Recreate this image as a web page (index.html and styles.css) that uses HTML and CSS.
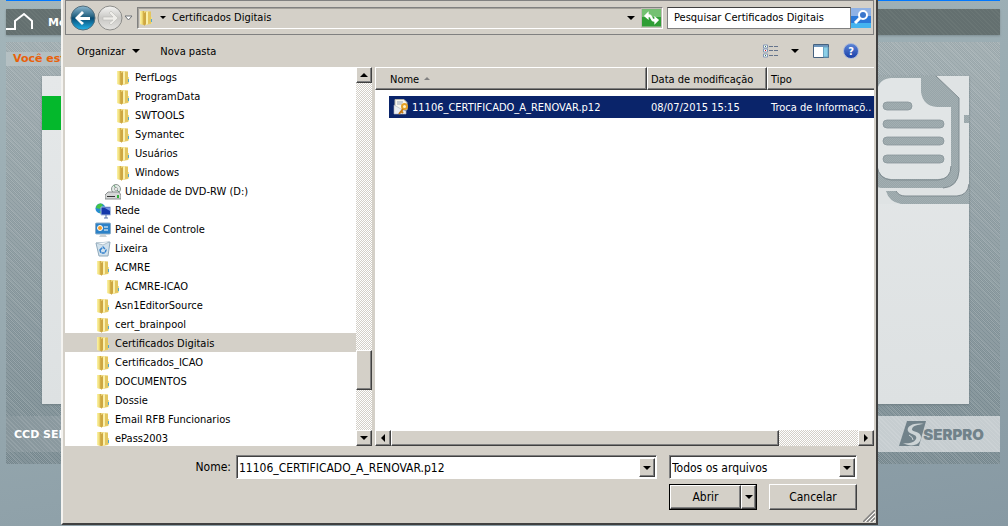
FILE: index.html
```html
<!DOCTYPE html>
<html lang="pt-BR">
<head>
  <meta charset="UTF-8">
  <meta name="viewport" content="width=device-width,initial-scale=1">
  <title>Certificados Digitais</title>
  <link rel="stylesheet" href="styles.css">
</head>
<body>
  <svg width="0" height="0" class="simbolos" aria-hidden="true">
    <defs>
      <linearGradient id="ouro" x1="0" x2="1">
        <stop offset="0" stop-color="#fbf3a8"/>
        <stop offset=".55" stop-color="#f0dc78"/>
        <stop offset="1" stop-color="#c99f34"/>
      </linearGradient>
      <linearGradient id="azul" x1="0" x2="0" y1="0" y2="1">
        <stop offset="0" stop-color="#8db9d2"/>
        <stop offset=".45" stop-color="#23607f"/>
        <stop offset=".5" stop-color="#084a72"/>
        <stop offset="1" stop-color="#20b4ec"/>
      </linearGradient>
      <linearGradient id="cinza" x1="0" x2="0" y1="0" y2="1">
        <stop offset="0" stop-color="#f5f5f3"/>
        <stop offset=".5" stop-color="#c9c8c5"/>
        <stop offset="1" stop-color="#e4e3e0"/>
      </linearGradient>
      <symbol id="pasta" viewBox="0 0 16 16">
        <path d="M2 1h5l6 1v12l-5 1-6-1z" fill="#ecd67c"/>
        <path d="M2 1h4v14l-4-1z" fill="url(#ouro)"/>
        <path d="M6 3l2-1v12l-2 2z" fill="#cda642"/>
        <path d="M8 2l3-1v12l-3 2z" fill="#faf0ab"/>
        <path d="M10 1.500h3v12l-3 .5z" fill="#e3c660"/>
        <path d="M13 7h1v6l-1 1z" fill="#efe08b"/>
        <path d="M13.500 9v3" stroke="#55a8cf"/>
      </symbol>
    </defs>
  </svg>

  <div class="site">
    <header class="menu">
      <svg class="casa" width="28" height="20" viewBox="0 0 28 20"><path d="M0 17h9V9l9-7 8 7v8" fill="none" stroke="#fff" stroke-width="2"/></svg>
      <span>Menu</span>
    </header>
    <main class="painel">
      <p class="caminho">Você está</p>
      <section class="conteudo">
        <div class="faixa"></div>
        <svg class="documento" width="92" height="128" viewBox="0 0 92 128">
          <defs>
            <pattern id="trama" width="2" height="2" patternUnits="userSpaceOnUse">
              <rect width="2" height="2" fill="#a3afb2"/>
              <path d="M0 0h1v1H0zM1 1h1v1H1z" fill="#98a5a9"/>
            </pattern>
          </defs>
          <path d="M0 0h92v128H0z" fill="url(#trama)"/>
          <path d="M0 100h92v28H0z" fill="#dfe3e4"/>
          <path d="M58 0h34v39h-5v8h5v64L80 121H20z" fill="#dfe3e4"/>
          <path d="M9 115h10q3 5 9 5h52q11-1 12-12v20H24Q12 126 9 115z" fill="url(#trama)"/>
          <path d="M19 115q3 5 9 5h52q11-1 12-12" fill="none" stroke="#7f8b90"/>
          <path d="M0 92V0h59l23 22v73q-1 16-16 17H4l-4-1z" fill="url(#trama)"/>
          <path d="M59 0l23 22v73q-1 16-16 17" fill="none" stroke="#7f8b90"/>
          <path d="M0 16Q1 3 14 2h30v14q2 14 16 15h14v59q0 13-13 13H14Q1 102 0 88z" fill="#e1e5e6"/>
          <path d="M0 90q2 13 14 14h47q13-1 13-14" fill="none" stroke="#7f8b90"/>
          <g fill="url(#trama)" stroke="#89969b" stroke-width=".8">
            <rect x="6" y="26" width="29" height="8" rx="4"/>
            <rect x="6" y="44" width="61" height="8" rx="4"/>
            <rect x="6" y="61" width="61" height="8" rx="4"/>
            <rect x="6" y="79" width="61" height="8" rx="4"/>
          </g>
        </svg>
      </section>
      <footer class="rodape">
        <span>CCD SER</span>
        <div class="serpro">
          <svg width="27" height="26" viewBox="0 0 27 26">
            <path d="M8 0h19l-7 25H0z" fill="#71828a"/>
            <path d="M25 3C14 1 7 6 9 10s10 3 8 8c-2 4-8 5-13 4 8 5 18 2 18-6 0-6-10-5-9-8 1-4 6-4 11-5z" fill="#cdd4d6"/>
            <path d="M11 8q1 3 6 4M10 14q4 2 4 5" fill="none" stroke="#cdd4d6"/>
          </svg>
          <b>SERPRO</b>
        </div>
      </footer>
    </main>
  </div>

  <div class="janela" role="dialog" aria-label="Abrir">
    <div class="navegacao">
      <div class="setas">
        <button type="button" aria-label="Voltar"><svg width="26" height="26" viewBox="0 0 26 26"><circle cx="13" cy="13" r="12" fill="url(#azul)" stroke="#536d7b"/><path d="M5 13l7-7 2 2-4 4h10v3H10l4 3-2 2z" fill="#fff"/></svg></button>
        <button type="button" aria-label="Avançar"><svg width="26" height="26" viewBox="0 0 26 26"><circle cx="13" cy="13" r="12" fill="url(#cinza)" stroke="#8d8d8a"/><path d="M21 13l-7-7-2 2 4 4H6v3h10l-4 3 2 2z" fill="#eeede9" stroke="#bbbab6" stroke-width=".6"/></svg></button>
        <button type="button" aria-label="Recentes"><svg width="9" height="6" viewBox="0 0 9 6"><path d="M1 1h7L4.500 5z" fill="#fff" stroke="#6f7377"/></svg></button>
      </div>
      <div class="endereco">
        <svg width="16" height="18" viewBox="0 0 16 16"><use href="#pasta"/></svg>
        <i class="seta pequena"></i>
        <span>Certificados Digitais</span>
        <i class="seta"></i>
        <button type="button" class="atualizar" aria-label="Atualizar"><svg width="19" height="18" viewBox="0 0 20 18"><path d="M0 0h20v18H0z" fill="#2f9e35"/><path d="M0 0h20v8H0z" fill="#74c172"/><path d="M2 7l5-5v3q4 0 4 5H9q0-2-2-2v3zM18 11l-5 5v-3q-4 0-4-5h2q0 2 2 2V7z" fill="#fff"/></svg></button>
      </div>
      <div class="busca">
        <input type="text" value="Pesquisar Certificados Digitais" aria-label="Pesquisar">
        <button type="button" aria-label="Buscar"><svg width="20" height="20" viewBox="0 0 20 20"><path d="M0 0h20v20H0z" fill="#2b78d8"/><path d="M0 0h20v8H0z" fill="#8fb2e6"/><path d="M0 15h20v5H0z" fill="#45b4f0"/><circle cx="12" cy="7" r="4" fill="#3a76cc" stroke="#fff" stroke-width="2"/><path d="M9 10l-5 5" stroke="#fff" stroke-width="3"/></svg></button>
      </div>
    </div>

    <div class="ferramentas">
      <button type="button">Organizar <i class="seta"></i></button>
      <button type="button">Nova pasta</button>
      <div class="direita">
        <button type="button" aria-label="Modo de exibição">
          <svg width="16" height="14" viewBox="0 0 16 14"><path d="M.5 1h4v3h-4zM.5 5h4v3h-4zM.5 10h4v3h-4z" fill="#fff" stroke="#8397b5"/><path d="M2 2h1v1H2zM2 11h1v1H2z" fill="#397d4a"/><path d="M2 6h1v1H2z" fill="#d11"/><path d="M6 2.500h4m1 0h4M6 6.500h4m1 0h4M6 11.500h4m1 0h4" stroke="#65748c"/></svg>
          <i class="seta"></i>
        </button>
        <button type="button" aria-label="Painel de visualização"><svg width="16" height="14" viewBox="0 0 16 14"><path d="M.5.5h15v13H.5z" fill="#fff" stroke="#45617f"/><path d="M1 1h14v2H1z" fill="#6c94bc"/><path d="M10.500 3h4.500v10h-4.500z" fill="#8bd0e8" stroke="#6ba5c4"/></svg></button>
        <button type="button" class="ajuda" aria-label="Ajuda">?</button>
      </div>
    </div>

    <div class="paineis">
      <ul class="arvore">
        <li class="n3"><svg><use href="#pasta"/></svg>PerfLogs</li>
        <li class="n3"><svg><use href="#pasta"/></svg>ProgramData</li>
        <li class="n3"><svg><use href="#pasta"/></svg>SWTOOLS</li>
        <li class="n3"><svg><use href="#pasta"/></svg>Symantec</li>
        <li class="n3"><svg><use href="#pasta"/></svg>Usuários</li>
        <li class="n3"><svg><use href="#pasta"/></svg>Windows</li>
        <li class="n2"><svg viewBox="0 0 16 16"><circle cx="11" cy="5" r="4.500" fill="#e4ece8" stroke="#8c9691"/><path d="M11 5L9 1m2 4l3 3" stroke="#64a273"/><circle cx="11" cy="5" r="1.500" fill="#fff" stroke="#777" stroke-width=".6"/><path d="M3 8h11l2 3v4H0v-4z" fill="#d5d7d7" stroke="#747878" stroke-width=".8"/><path d="M2 12.500h8" stroke="#333"/><path d="M12 11h2v3h-2z" fill="#35b23c"/></svg>Unidade de DVD-RW (D:)</li>
        <li class="n1"><svg viewBox="0 0 16 16"><circle cx="5.500" cy="5.500" r="5" fill="#278bd2"/><path d="M2 2q4-3 6 0L5 6 1 5zM4 8l3 1-1 2z" fill="#45c446"/><path d="M6 4h9.500v8H6z" fill="#1538aa" stroke="#a9bddd"/><path d="M10 5h5v3z" fill="#7394e4"/><path d="M11 12v3m-2 0h4" stroke="#5973a7"/></svg>Rede</li>
        <li class="n1"><svg viewBox="0 0 16 16"><rect x=".5" y="1" width="15" height="11" rx="1" fill="#2c82c8" stroke="#89acc9"/><circle cx="5" cy="6" r="2.500" fill="#f79b25" stroke="#fff"/><path d="M9 5h4M9 8h4" stroke="#fff"/><path d="M6 12h4l2 3H4z" fill="#c7d0d5"/></svg>Painel de Controle</li>
        <li class="n1"><svg viewBox="0 0 16 16"><path d="M1 2l14-1-2 14H4z" fill="#d1e1ec" stroke="#8fa9bb"/><path d="M1 2l7 2 6-3" fill="#f5f9fb" stroke="#98aebb" stroke-width=".7"/><path d="M5 9l3-3 3 3-1 3H6z" fill="none" stroke="#3481cd" stroke-width="1.500" stroke-dasharray="3 1"/></svg>Lixeira</li>
        <li class="n1"><svg><use href="#pasta"/></svg>ACMRE</li>
        <li class="n2"><svg><use href="#pasta"/></svg>ACMRE-ICAO</li>
        <li class="n1"><svg><use href="#pasta"/></svg>Asn1EditorSource</li>
        <li class="n1"><svg><use href="#pasta"/></svg>cert_brainpool</li>
        <li class="n1 atual"><svg><use href="#pasta"/></svg>Certificados Digitais</li>
        <li class="n1"><svg><use href="#pasta"/></svg>Certificados_ICAO</li>
        <li class="n1"><svg><use href="#pasta"/></svg>DOCUMENTOS</li>
        <li class="n1"><svg><use href="#pasta"/></svg>Dossie</li>
        <li class="n1"><svg><use href="#pasta"/></svg>Email RFB Funcionarios</li>
        <li class="n1"><svg><use href="#pasta"/></svg>ePass2003</li>
      </ul>
      <div class="rolagem vertical">
        <button type="button" class="botao" aria-label="Subir"><i class="seta cima"></i></button>
        <div class="trilho"><div class="polegar"></div></div>
        <button type="button" class="botao" aria-label="Descer"><i class="seta"></i></button>
      </div>
      <div class="lista">
        <table>
          <thead>
            <tr>
              <th class="nome">Nome <i class="seta cima ordem"></i></th>
              <th class="data">Data de modificação</th>
              <th>Tipo</th>
            </tr>
          </thead>
          <tbody>
            <tr>
              <td class="nome"><div>
                <svg width="16" height="16" viewBox="0 0 16 16"><path d="M2 .5h9l3 3V11H2z" fill="#f8f6ee" stroke="#b9b6aa"/><path d="M4 3h6M4 5h5" stroke="#9ba6b7"/><path d="M1 6l7 4 5 2v3H1z" fill="#e9edf2" stroke="#aeb4bd" stroke-width=".6"/><circle cx="11.500" cy="7.500" r="2.500" fill="#fff3c4" stroke="#e6a126" stroke-width="2"/><path d="M10 10l-4 5m2-3l2 2" stroke="#c37812" stroke-width="2"/></svg>
                11106_CERTIFICADO_A_RENOVAR.p12</div></td>
              <td>08/07/2015 15:15</td>
              <td>Troca de Informaçõ..</td>
            </tr>
          </tbody>
        </table>
        <div class="rolagem horizontal">
          <button type="button" class="botao" aria-label="Esquerda"><i class="seta esq"></i></button>
          <div class="trilho"><div class="polegar"></div></div>
          <button type="button" class="botao" aria-label="Direita"><i class="seta dir"></i></button>
        </div>
      </div>
    </div>

    <form class="abrir">
      <label for="arquivo">Nome:</label>
      <div class="caixa">
        <input type="text" id="arquivo" value="11106_CERTIFICADO_A_RENOVAR.p12">
        <button type="button" class="botao" aria-label="Arquivos recentes"><i class="seta"></i></button>
      </div>
      <div class="caixa tipo">
        <select aria-label="Tipo de arquivo"><option>Todos os arquivos</option></select>
        <span class="botao"><i class="seta"></i></span>
      </div>
      <div class="acoes">
        <div class="dividido">
          <button type="button" class="botao">Abrir</button>
          <button type="button" class="botao mais" aria-label="Mais opções"><i class="seta"></i></button>
        </div>
        <button type="button" class="botao cancelar">Cancelar</button>
      </div>
    </form>
    <svg class="canto" width="12" height="12" viewBox="0 0 12 12"><path d="M0 12L12 0M4 12l8-8M8 12l4-4" stroke="#808080" stroke-width="1.500"/><path d="M2 12L12 2M6 12l6-6M10 12l2-2" stroke="#fff"/></svg>
  </div>
</body>
</html>
```
FILE: styles.css
```css
*{
  box-sizing: border-box;
  margin: 0; padding: 0;
}
body{
  min-height: 100vh;
  overflow: hidden;
  font-family: "DejaVu Sans Condensed", "Noto Sans", sans-serif;
  font-size: 11px;
  color: #000;
  background: linear-gradient(170deg, #a3b5ba, #94a6ad 60%, #8799a3);
}
button, input, select{
  font: inherit;
  color: inherit;
  border: 0;
  background: none;
  outline: 0;
}
.simbolos{
  position: absolute;
}

/* pagina do fundo */
.site{
  padding: 0 8px 0 6px;
  font-family: "DejaVu Sans", sans-serif;
  font-weight: bold;
}
.site::before{
  content: "";
  display: block;
  height: 1px;
  background: #0078ff;
}
.menu{
  display: flex;
  align-items: center;
  gap: 14px;
  height: 26px;
  margin: 8px 0 7px;
  color: #fff;
  background: repeating-linear-gradient(45deg, #6a7675 0 1px, #647070 1px 3px);
  box-shadow: 0 1px 2px #7f8f94;
}
.painel{
  padding-top: 10px;
  padding-bottom: 12px;
  background:
    repeating-conic-gradient(rgba(255,255,255,.12) 0 25%, transparent 0 50%) 0 0 / 2px 2px,
    repeating-linear-gradient(45deg, rgba(255,255,255,.1) 0 1px, transparent 1px 3px),
    linear-gradient(#9ba8ac, #74868d);
}
.caminho{
  height: 14px;
  margin-bottom: 10px;
  padding-left: 7px;
  line-height: 14px;
  color: #e8610a;
  background: linear-gradient(90deg, #b5c0c3, transparent 50%);
}
.conteudo{
  position: relative;
  height: 328px;
  margin: 0 31px 12px 36px;
  padding-top: 20px;
  background: linear-gradient(#e5e8e9, #dde1e2);
  box-shadow: 0 1px 2px #6f7d83;
}
.faixa{
  height: 34px;
  background: #04b82c;
}
.documento{
  position: absolute;
  top: 0; right: 0;
}
.rodape{
  display: flex;
  align-items: center;
  justify-content: space-between;
  height: 36px;
  padding: 0 16px 0 8px;
  color: #fff;
  background:
    repeating-linear-gradient(45deg, rgba(255,255,255,.1) 0 1px, transparent 1px 3px),
    linear-gradient(90deg, #87969c, #c6cdd0 80%);
}
.serpro{
  display: flex;
  align-items: center;
  color: #71828a;
}
.serpro b{
  margin-left: -3px;
  font: 900 15px Inter, sans-serif;
}

/* janela de abrir arquivo */
.janela{
  position: absolute;
  top: 0; bottom: 1px; left: 61px; right: 130px;
  display: flex;
  flex-direction: column;
  padding: 0 2px;
  background: #d4d0c8;
  border-left: 2px solid #f4f3f0;
  border-right: 2px solid #404040;
  border-bottom: 2px solid #404040;
}
.seta{
  display: inline-block;
  flex: none;
  border: 4px solid transparent;
  border-top-color: #000;
  border-bottom: 0;
}
.pequena{
  border-width: 3px;
  border-bottom: 0;
}
.cima{
  border-top: 0;
  border-bottom: 4px solid #000;
}
.esq, .dir{
  border: 4px solid transparent;
}
.esq{
  border-left: 0;
  border-right-color: #000;
}
.dir{
  border-right: 0;
  border-left-color: #000;
}
.navegacao{
  display: flex;
  align-items: center;
  gap: 4px;
  height: 35px;
  border: 1px solid #808080;
  padding: 0 2px 0 4px;
}
.setas{
  display: flex;
  align-items: center;
  gap: 1px;
}
.setas button{
  display: flex;
}
.endereco{
  display: flex;
  align-items: center;
  flex: 1;
  gap: 6px;
  height: 22px;
  border: 1px solid #808080;
  border-right-color: #fff;
  border-bottom-color: #fff;
  box-shadow: inset 1px 1px #a5a29b;
}
.endereco span{
  flex: 1;
}
.atualizar{
  display: flex;
  border: 1px solid #c0bdb5;
}
.busca{
  display: flex;
  width: 204px;
  height: 22px;
}
.busca input{
  flex: 1;
  min-width: 0;
  padding-left: 6px;
  background: #fff;
  border: 1px solid #808080;
  border-top-color: #404040;
}
.busca button{
  display: flex;
  padding: 1px 0;
}
.ferramentas{
  display: flex;
  align-items: center;
  gap: 20px;
  height: 32px;
  padding: 0 15px 0 12px;
}
.ferramentas button{
  display: flex;
  align-items: center;
  gap: 7px;
}
.direita{
  display: flex;
  gap: 14px;
  margin-left: auto;
}
.direita button{
  gap: 12px;
}
.ferramentas .ajuda{
  justify-content: center;
  width: 16px; height: 16px;
  border: 1px solid #aab8d8;
  border-radius: 8px;
  color: #fff;
  font-weight: bold;
  background: linear-gradient(#5c85d6, #1a3fa8);
}
.paineis{
  display: flex;
  flex: 1;
  min-height: 0;
}
.arvore{
  width: 291px;
  overflow: hidden;
  list-style: none;
  background: #fff;
}
.arvore li{
  display: flex;
  align-items: center;
  gap: 4px;
  height: 19px;
  padding-top: 2px;
  white-space: nowrap;
}
.arvore svg{
  width: 16px; height: 16px;
}
.arvore .n1{
  padding-left: 30px;
}
.arvore .n2{
  padding-left: 40px;
}
.arvore .n3{
  padding-left: 50px;
}
.arvore .atual{
  background: #d4d0c8;
}
.botao{
  display: flex;
  align-items: center;
  justify-content: center;
  background: #d4d0c8;
  border: 1px solid #fff;
  border-right-color: #404040;
  border-bottom-color: #404040;
  box-shadow: inset -1px -1px #808080;
}
.rolagem{
  display: flex;
  background: repeating-conic-gradient(#fff 0 25%, #d4d0c8 0 50%) 0 0 / 2px 2px;
}
.rolagem .botao{
  flex: none;
  width: 16px; height: 16px;
}
.trilho{
  display: flex;
  flex: 1;
}
.polegar{
  background: #d4d0c8;
  border: 1px solid #fff;
  border-right-color: #404040;
  border-bottom-color: #404040;
  box-shadow: inset -1px -1px #808080;
}
.vertical{
  flex-direction: column;
  width: 16px;
  margin-right: 3px;
}
.vertical .trilho{
  flex-direction: column;
  justify-content: flex-end;
  padding-bottom: 40px;
}
.vertical .polegar{
  height: 40px;
}
.horizontal .polegar{
  width: 83%;
}
.lista{
  display: flex;
  flex-direction: column;
  justify-content: space-between;
  flex: 1;
  min-width: 0;
  background: #fff;
}
table{
  width: 100%;
  table-layout: fixed;
  border-collapse: separate;
  border-spacing: 0;
}
th{
  height: 23px;
  padding-top: 2px;
  padding-left: 3px;
  text-align: left;
  font-weight: normal;
  background: #d4d0c8;
  border: 1px solid #fff;
  border-right-color: #404040;
  border-bottom-color: #404040;
  box-shadow: inset -1px -1px #808080;
}
th:last-child{
  border-right: 0;
  box-shadow: inset 0 -1px #808080;
}
th.nome{
  width: 272px;
  padding-left: 14px;
}
th.data{
  width: 120px;
}
.ordem{
  border-width: 0 3px 3px;
  border-bottom-color: #808080;
  margin: 0 0 3px 2px;
}
tbody::before{
  content: "";
  display: block;
  height: 6px;
}
td{
  height: 22px;
  padding-left: 4px;
  color: #fff;
  white-space: nowrap;
  overflow: hidden;
  background: #0a246a;
}
td.nome{
  padding-left: 14px;
  background: #fff;
}
td div{
  display: flex;
  align-items: center;
  gap: 3px;
  height: 22px;
  padding-left: 4px;
  background: #0a246a;
}
.abrir{
  display: grid;
  grid-template-columns: 166px 1fr 188px;
  grid-template-rows: 24px 26px;
  gap: 5px 0;
  padding: 9px 17px 13px 0;
}
.abrir label{
  align-self: center;
  text-align: right;
}
.abrir label, .caixa input, .cancelar{
  font-size: 12px;
}
.caixa{
  display: flex;
  margin-left: 5px;
  background: #fff;
  border: 1px solid #808080;
  border-right-color: #fff;
  border-bottom-color: #fff;
  box-shadow: inset 1px 1px #404040;
  padding: 2px 1px 1px 2px;
}
.caixa.tipo{
  margin-left: 0;
}
.abrir .caixa:not(.tipo){
  margin-right: 12px;
}
.caixa input, .caixa select{
  flex: 1;
  min-width: 0;
  appearance: none;
}
.caixa select, .dividido, .cancelar{
  font-size: 12px;
}
.caixa .botao{
  width: 16px;
}
.caixa .botao .seta{
  pointer-events: none;
}
.acoes{
  grid-column: 3;
  display: grid;
  grid-template-columns: 1fr 1fr;
  gap: 12px;
}
.dividido{
  display: flex;
  border: 1px solid #000;
}
.dividido .botao{
  flex: 1;
}
.dividido .mais{
  flex: none;
  width: 15px;
}
.canto{
  position: absolute;
  right: 1px; bottom: 1px;
}
```
